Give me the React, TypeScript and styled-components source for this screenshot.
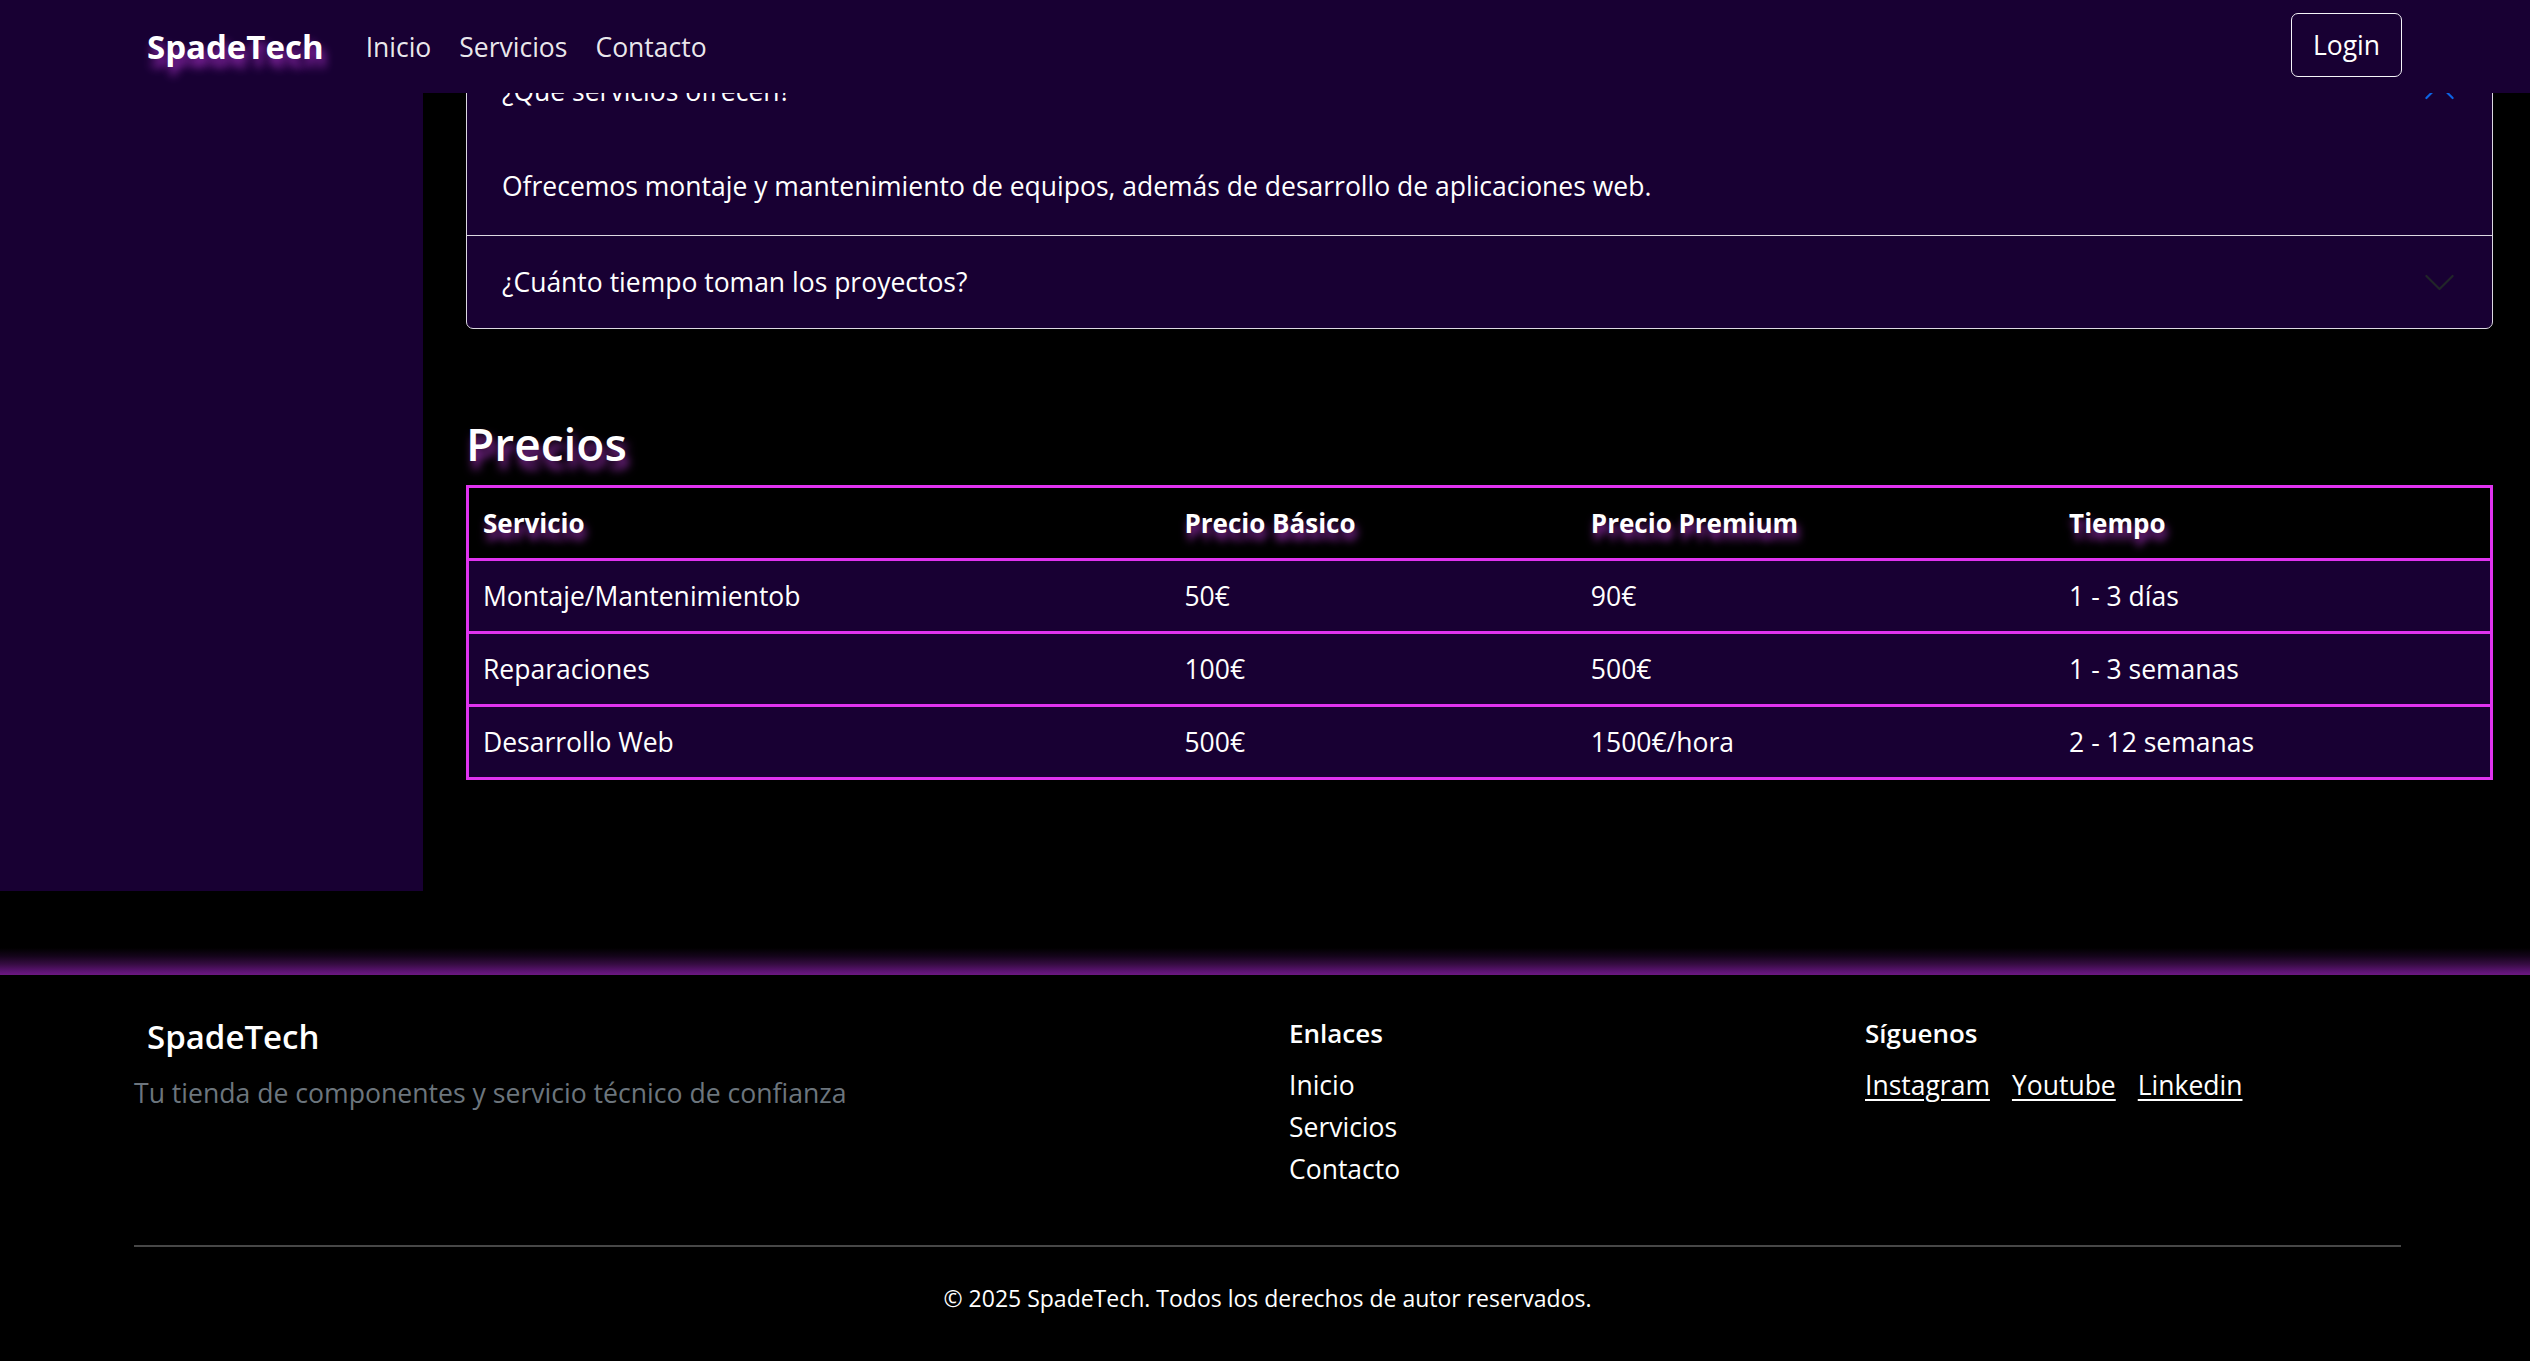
import React from "react";
import styled, { createGlobalStyle } from "styled-components";

const PURPLE = "#180033";
const MAGENTA = "#e033f0";
const GLOW = "rgba(185, 55, 215, 0.8)";
const FONT = `"Open Sans", "Noto Sans", "Liberation Sans", sans-serif`;

const GlobalStyle = createGlobalStyle`
  *, *::before, *::after { box-sizing: border-box; }
  html, body { margin: 0; padding: 0; background: #000; }
  body {
    font-family: ${FONT};
    font-size: 26.5px;
    line-height: 42px;
    color: #fff;
  }
`;

/* ---------- Navbar ---------- */
const NavBar = styled.nav`
  position: fixed;
  top: 0;
  left: 0;
  right: 0;
  z-index: 10;
  height: 93px;
  display: flex;
  align-items: center;
  padding: 0 128px 0 147px;
  background: ${PURPLE};
`;

const Brand = styled.a`
  font-size: 33px;
  line-height: 50px;
  font-weight: 700;
  color: #fff;
  text-decoration: none;
  margin-right: 28px;
  text-shadow: 3px 8px 10px ${GLOW};
`;

const NavList = styled.ul`
  display: flex;
  list-style: none;
  margin: 0;
  padding: 0;
`;

const NavLink = styled.a`
  display: block;
  padding: 0 14px;
  font-size: 26.5px;
  line-height: 42px;
  color: rgba(255, 255, 255, 0.92);
  text-decoration: none;
`;

const LoginButton = styled.button`
  margin-left: auto;
  height: 64px;
  padding: 0 21px;
  background: transparent;
  border: 1.5px solid #f4f4f8;
  border-radius: 7px;
  color: #fff;
  font-family: ${FONT};
  font-size: 26.5px;
  line-height: 42px;
  margin-top: -3px;
`;

/* ---------- Layout ---------- */
const Shell = styled.div`
  display: grid;
  grid-template-columns: 423px 1fr;
`;

const Sidebar = styled.aside`
  background: ${PURPLE};
`;

const Main = styled.main`
  padding: 44px 37px 111px 43px;
  background: #000;
`;

/* ---------- Accordion ---------- */
const Accordion = styled.div`
  border: 1px solid #dcd8e2;
  border-radius: 7px;
  overflow: hidden;
  background: ${PURPLE};
`;

const AccordionItem = styled.div<{ $first?: boolean }>`
  border-top: ${(p) => (p.$first ? "0" : "1px solid #dcd8e2")};
`;

const AccordionHeader = styled.button`
  display: flex;
  align-items: center;
  width: 100%;
  padding: 25px 35px;
  border: 0;
  background: transparent;
  color: #fff;
  font-family: ${FONT};
  font-size: 26.5px;
  line-height: 42px;
  text-align: left;
`;

const Chevron = styled.svg<{ $open?: boolean }>`
  margin-left: auto;
  width: 35px;
  height: 35px;
  flex-shrink: 0;
  fill: ${(p) => (p.$open ? "#0c63e4" : "#212529")};
  transform: ${(p) => (p.$open ? "rotate(-180deg)" : "none")};
`;

const AccordionBody = styled.div`
  padding: 28px 35px;
  font-size: 26.5px;
  line-height: 42px;
`;

/* ---------- Pricing ---------- */
const Section = styled.section`
  margin-top: 86px;
`;

const SectionTitle = styled.h3`
  margin: 0 0 14px;
  font-size: 46px;
  line-height: 56px;
  font-weight: 600;
  text-shadow: 3px 8px 10px ${GLOW};
`;

const PriceTable = styled.table`
  width: 100%;
  border-collapse: collapse;
  table-layout: fixed;
  border: 3px solid ${MAGENTA};
`;

const Row = styled.tr<{ $head?: boolean }>`
  background: ${(p) => (p.$head ? "#000" : PURPLE)};
  border-bottom: 3px solid ${MAGENTA};
`;

const HeadCell = styled.th`
  padding: 14px;
  text-align: left;
  font-size: 26px;
  line-height: 42px;
  font-weight: 700;
  text-shadow: 2px 7px 9px ${GLOW};
`;

const Cell = styled.td`
  padding: 14px;
  font-size: 26.5px;
  line-height: 42px;
`;

/* ---------- Footer ---------- */
const GlowStrip = styled.div`
  margin-top: 57px;
  height: 27px;
  background: linear-gradient(
    to bottom,
    rgba(0, 0, 0, 1) 0%,
    #14041a 30%,
    #360c42 60%,
    #5a1370 85%,
    #6c1882 100%
  );
`;

const Footer = styled.footer`
  padding: 41px 129px 26px 134px;
  background: #000;
`;

const FooterGrid = styled.div`
  display: grid;
  grid-template-columns: 1155px 576px 1fr;
`;

const FooterBrand = styled.h5`
  margin: 0 0 14px 13px;
  font-size: 33px;
  line-height: 42px;
  font-weight: 600;
`;

const Tagline = styled.p`
  margin: 0;
  font-size: 26.6px;
  line-height: 42px;
  color: #6c757d;
`;

const ColumnTitle = styled.h6`
  margin: 0 0 14px;
  font-size: 26px;
  line-height: 34px;
  font-weight: 600;
`;

const LinkList = styled.ul`
  list-style: none;
  margin: 0;
  padding: 0;
`;

const FooterLink = styled.a`
  font-size: 26.5px;
  line-height: 42px;
  color: #fff;
  text-decoration: none;
`;

const SocialRow = styled.div`
  display: flex;
  gap: 22px;
`;

const SocialLink = styled.a`
  font-size: 26.5px;
  line-height: 42px;
  color: #fff;
  text-decoration: underline;
  text-underline-offset: 4px;
`;

const Divider = styled.hr`
  margin: 55px 0 33px;
  border: 0;
  border-top: 2px solid #474747;
`;

const Copyright = styled.p`
  margin: 0;
  text-align: center;
  font-size: 23px;
  line-height: 37px;
`;

const ChevronIcon = ({ open }: { open?: boolean }) => (
  <Chevron $open={open} viewBox="0 0 16 16" aria-hidden="true">
    <path
      fillRule="evenodd"
      d="M1.646 4.646a.5.5 0 0 1 .708 0L8 10.293l5.646-5.647a.5.5 0 0 1 .708.708l-6 6a.5.5 0 0 1-.708 0l-6-6a.5.5 0 0 1 0-.708z"
    />
  </Chevron>
);

const prices = [
  { s: "Montaje/Mantenimientob", b: "50€", p: "90€", t: "1 - 3 días" },
  { s: "Reparaciones", b: "100€", p: "500€", t: "1 - 3 semanas" },
  { s: "Desarrollo Web", b: "500€", p: "1500€/hora", t: "2 - 12 semanas" },
];

export default function App() {
  return (
    <>
      <GlobalStyle />
      <NavBar>
        <Brand href="#">SpadeTech</Brand>
        <NavList>
          <li><NavLink href="#">Inicio</NavLink></li>
          <li><NavLink href="#">Servicios</NavLink></li>
          <li><NavLink href="#">Contacto</NavLink></li>
        </NavList>
        <LoginButton>Login</LoginButton>
      </NavBar>

      <Shell>
        <Sidebar />
        <Main>
          <Accordion>
            <AccordionItem $first>
              <AccordionHeader>
                ¿Qué servicios ofrecen?
                <ChevronIcon open />
              </AccordionHeader>
              <AccordionBody>
                Ofrecemos montaje y mantenimiento de equipos, además de desarrollo de aplicaciones web.
              </AccordionBody>
            </AccordionItem>
            <AccordionItem>
              <AccordionHeader>
                ¿Cuánto tiempo toman los proyectos?
                <ChevronIcon />
              </AccordionHeader>
            </AccordionItem>
          </Accordion>

          <Section>
            <SectionTitle>Precios</SectionTitle>
            <PriceTable>
              <colgroup>
                <col style={{ width: "34.73%" }} />
                <col style={{ width: "20.08%" }} />
                <col style={{ width: "23.63%" }} />
                <col />
              </colgroup>
              <thead>
                <Row $head>
                  <HeadCell>Servicio</HeadCell>
                  <HeadCell>Precio Básico</HeadCell>
                  <HeadCell>Precio Premium</HeadCell>
                  <HeadCell>Tiempo</HeadCell>
                </Row>
              </thead>
              <tbody>
                {prices.map((r) => (
                  <Row key={r.s}>
                    <Cell>{r.s}</Cell>
                    <Cell>{r.b}</Cell>
                    <Cell>{r.p}</Cell>
                    <Cell>{r.t}</Cell>
                  </Row>
                ))}
              </tbody>
            </PriceTable>
          </Section>
        </Main>
      </Shell>

      <GlowStrip />
      <Footer>
        <FooterGrid>
          <div>
            <FooterBrand>SpadeTech</FooterBrand>
            <Tagline>Tu tienda de componentes y servicio técnico de confianza</Tagline>
          </div>
          <div>
            <ColumnTitle>Enlaces</ColumnTitle>
            <LinkList>
              <li><FooterLink href="#">Inicio</FooterLink></li>
              <li><FooterLink href="#">Servicios</FooterLink></li>
              <li><FooterLink href="#">Contacto</FooterLink></li>
            </LinkList>
          </div>
          <div>
            <ColumnTitle>Síguenos</ColumnTitle>
            <SocialRow>
              <SocialLink href="#">Instagram</SocialLink>
              <SocialLink href="#">Youtube</SocialLink>
              <SocialLink href="#">Linkedin</SocialLink>
            </SocialRow>
          </div>
        </FooterGrid>
        <Divider />
        <Copyright>© 2025 SpadeTech. Todos los derechos de autor reservados.</Copyright>
      </Footer>
    </>
  );
}
